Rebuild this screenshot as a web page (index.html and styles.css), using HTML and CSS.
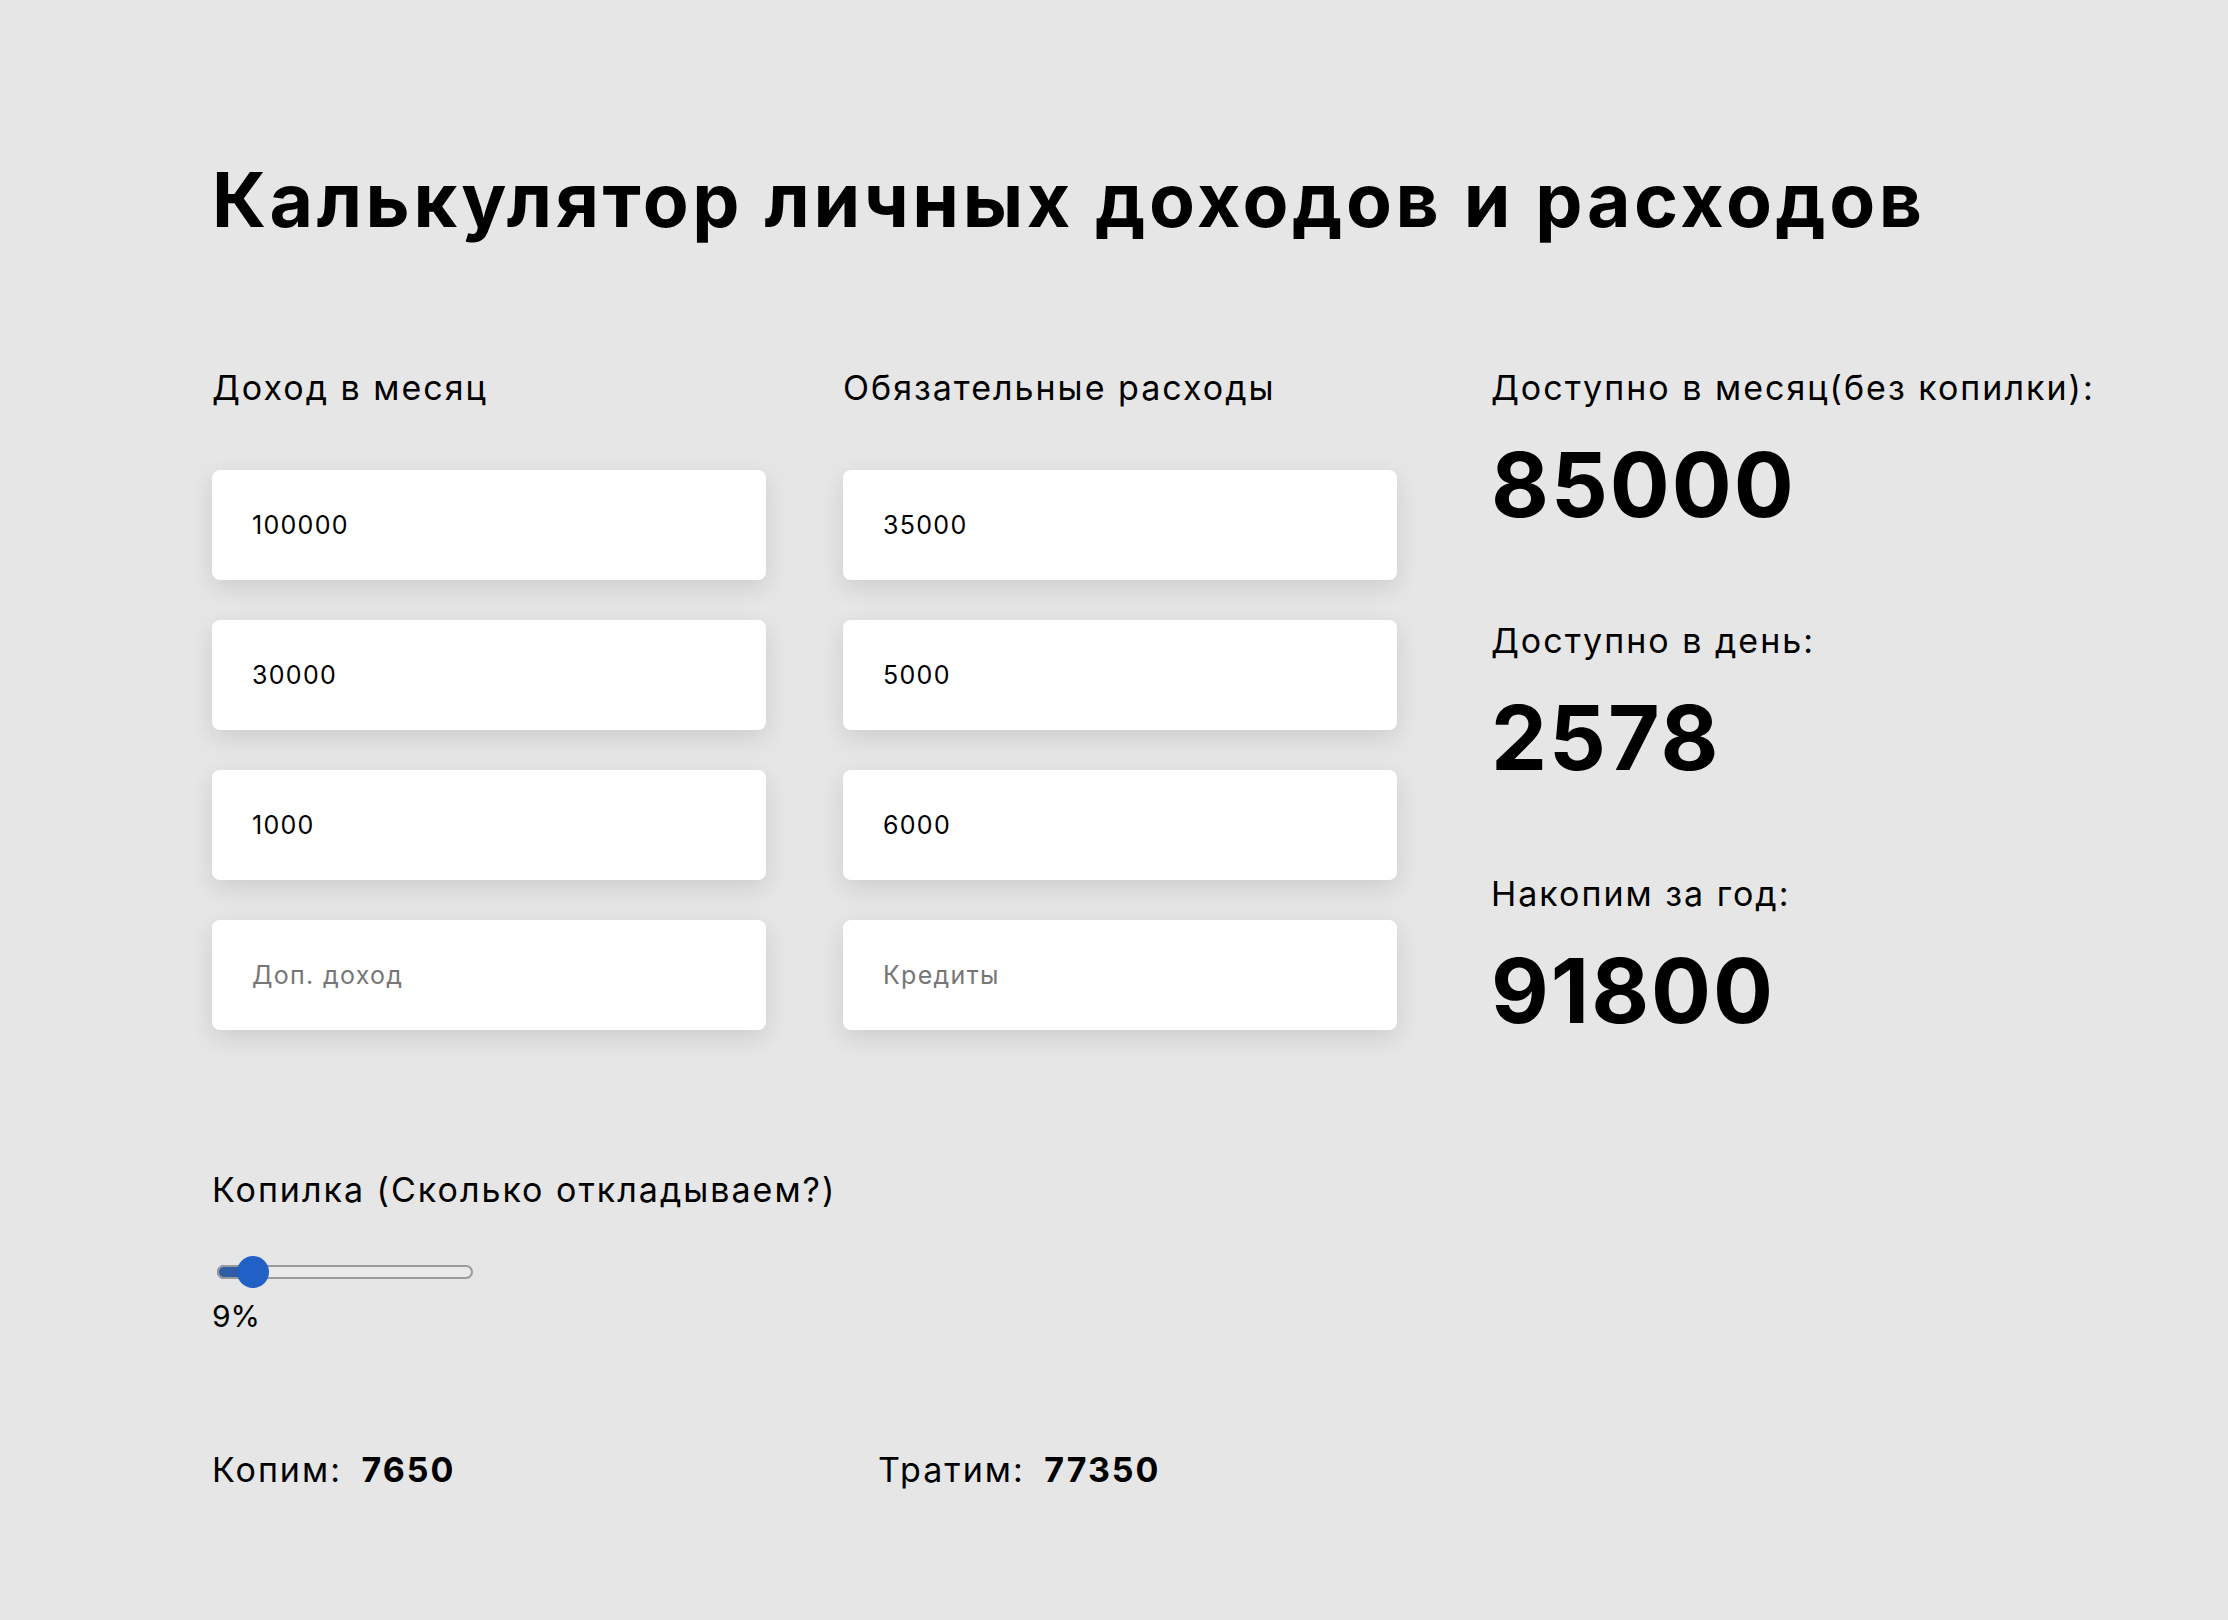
FILE: index.html
```html
<!DOCTYPE html>
<html lang="ru">
<head>
<meta charset="utf-8">
<title>Калькулятор личных доходов и расходов</title>
<link rel="stylesheet" href="styles.css">
</head>
<body>
<main class="page">
  <h1 class="title">Калькулятор личных доходов и расходов</h1>
  <section class="grid">
    <div class="col">
      <div class="col-label">Доход в месяц</div>
      <div class="fields">
        <input class="field" type="text" value="100000">
        <input class="field" type="text" value="30000">
        <input class="field" type="text" value="1000">
        <input class="field" type="text" placeholder="Доп. доход">
      </div>
    </div>
    <div class="col">
      <div class="col-label">Обязательные расходы</div>
      <div class="fields">
        <input class="field" type="text" value="35000">
        <input class="field" type="text" value="5000">
        <input class="field" type="text" value="6000">
        <input class="field" type="text" placeholder="Кредиты">
      </div>
    </div>
    <div class="results">
      <div class="result">
        <div class="result-label">Доступно в месяц(без копилки):</div>
        <div class="result-value">85000</div>
      </div>
      <div class="result">
        <div class="result-label">Доступно в день:</div>
        <div class="result-value">2578</div>
      </div>
      <div class="result">
        <div class="result-label">Накопим за год:</div>
        <div class="result-value">91800</div>
      </div>
    </div>
  </section>
  <section class="savings">
    <div class="savings-label">Копилка (Сколько откладываем?)</div>
    <input class="range" type="range" min="0" max="100" value="9" style="--fill: 14%">
    <div class="percent">9%</div>
  </section>
  <section class="totals">
    <div class="total">Копим: <b class="total-value">7650</b></div>
    <div class="total">Тратим: <b class="total-value">77350</b></div>
  </section>
</main>
</body>
</html>
```

FILE: styles.css
```css
html, body {
  margin: 0;
  padding: 0;
  background: #e6e6e6;
}

body {
  font-family: Inter, "Open Sans", "DejaVu Sans", sans-serif;
  color: #000;
}

.page {
  padding: 155px 0 100px 212px;
}

.title {
  margin: 0;
  font-size: 75px;
  line-height: 90px;
  font-weight: 700;
  letter-spacing: 3.6px;
}

.grid {
  margin-top: 123px;
  display: grid;
  grid-template-columns: 554px 554px 1fr;
  column-gap: 77px;
  align-items: start;
}

.col-label,
.result-label,
.savings-label,
.total {
  font-size: 34px;
  line-height: 40px;
  font-weight: 400;
  letter-spacing: 2px;
}

.col-label {
  margin-top: 0;
  margin-bottom: 62px;
  white-space: nowrap;
}

.fields {
  display: flex;
  flex-direction: column;
  gap: 40px;
}

.field {
  display: block;
  box-sizing: border-box;
  width: 554px;
  height: 110px;
  margin: 0;
  padding: 0 40px;
  border: none;
  outline: none;
  border-radius: 8px;
  background: #fff;
  box-shadow: 0 8px 24px rgba(0, 0, 0, 0.11);
  font-family: inherit;
  font-size: 25px;
  letter-spacing: 1.3px;
  color: #000;
}

.field::placeholder {
  color: #767676;
}

.results {
  margin-left: 17px;
  display: flex;
  flex-direction: column;
  gap: 86px;
}

.result-label {
  white-space: nowrap;
}

.result-value {
  margin-top: 27px;
  font-size: 89px;
  line-height: 100px;
  font-weight: 700;
  letter-spacing: 2px;
}

.savings {
  margin-top: 129px;
}

.range {
  display: block;
  -webkit-appearance: none;
  appearance: none;
  width: 256px;
  height: 32px;
  margin: 46px 0 0 5px;
  padding: 0;
  background: transparent;
}

.range::-webkit-slider-runnable-track {
  height: 14px;
  border-radius: 7px;
  background: linear-gradient(to right, #2f5ca6 0, #2f5ca6 var(--fill), #e9e9e9 var(--fill), #e9e9e9 100%);
  box-shadow: inset 0 0 0 2px #9b9b9b;
}

.range::-webkit-slider-thumb {
  -webkit-appearance: none;
  appearance: none;
  width: 32px;
  height: 32px;
  margin-top: -9px;
  border: none;
  border-radius: 50%;
  background: #2161c5;
}

.percent {
  margin-top: 10px;
  font-size: 30px;
  line-height: 36px;
}

.totals {
  margin-top: 116px;
  display: flex;
}

.total {
  width: 666px;
}

.total-value {
  margin-left: 8px;
  font-weight: 700;
  letter-spacing: 2px;
}
```
